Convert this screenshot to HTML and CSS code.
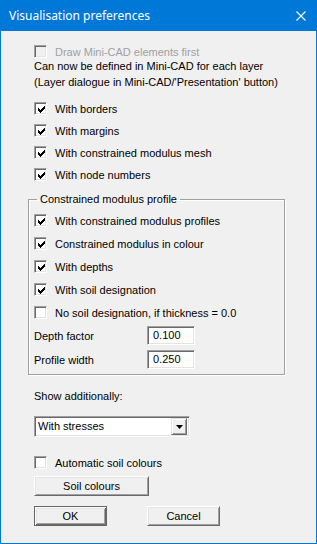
FILE: index.html
```html
<!DOCTYPE html>
<html lang="en">
<head>
  <meta charset="UTF-8" />
  <title>Visualisation preferences</title>
  <link rel="stylesheet" href="styles.css">
</head>
<body>

  <div class="window">
    <div class="titlebar">
      <span class="title">Visualisation preferences</span>
      <svg class="close" viewBox="0 0 10 10" width="10" height="10">
        <path d="M0.5 0.5L9.5 9.5M9.5 0.5L0.5 9.5" stroke="#fff" stroke-width="1.1" fill="none"/>
      </svg>
    </div>

    <div class="client">
      <div class="check disabled"><span class="box"></span><span class="label">Draw Mini-CAD elements first</span></div>
      <p class="note">Can now be defined in Mini-CAD for each layer<br>(Layer dialogue in Mini-CAD/'Presentation' button)</p>

      <div class="checks first">
        <div class="check on"><span class="box"></span><span class="label">With borders</span></div>
        <div class="check on"><span class="box"></span><span class="label">With margins</span></div>
        <div class="check on"><span class="box"></span><span class="label">With constrained modulus mesh</span></div>
        <div class="check on"><span class="box"></span><span class="label">With node numbers</span></div>
      </div>

      <fieldset class="group">
        <legend>Constrained modulus profile</legend>
        <div class="checks inner">
          <div class="check on"><span class="box"></span><span class="label">With constrained modulus profiles</span></div>
          <div class="check on"><span class="box"></span><span class="label">Constrained modulus in colour</span></div>
          <div class="check on"><span class="box"></span><span class="label">With depths</span></div>
          <div class="check on"><span class="box"></span><span class="label">With soil designation</span></div>
          <div class="check"><span class="box"></span><span class="label">No soil designation, if thickness = 0.0</span></div>
        </div>
        <div class="fields">
          <div class="field"><span class="field-label">Depth factor</span><span class="edit">0.100</span></div>
          <div class="field"><span class="field-label">Profile width</span><span class="edit">0.250</span></div>
        </div>
      </fieldset>

      <div class="caption">Show additionally:</div>
      <div class="combo">
        <span class="combo-value">With stresses</span>
        <span class="combo-btn">
          <svg viewBox="0 0 7 4" width="7" height="4"><path d="M0 0h7L3.5 4z" fill="#000"/></svg>
        </span>
      </div>

      <div class="check auto"><span class="box"></span><span class="label">Automatic soil colours</span></div>
      <button class="btn wide">Soil colours</button>

      <div class="buttons">
        <button class="btn default">OK</button>
        <button class="btn">Cancel</button>
      </div>
    </div>
  </div>

  <script>
    // tick mark for every checked box
    var tick = '<svg viewBox="0 0 9 9" width="9" height="9"><path fill="#000" d="M1 3h1v3h-1zM2 4h1v3h-1zM3 5h1v3h-1zM4 4h1v3h-1zM5 3h1v3h-1zM6 2h1v3h-1zM7 1h1v3h-1z"/></svg>';
    document.querySelectorAll('.check.on .box').forEach(function (b) {
      b.innerHTML = tick;
    });
  </script>

</body>
</html>
```

FILE: styles.css
```css
html, body {
  margin: 0;
  padding: 0;
}

body {
  font-family: "Liberation Sans", Arial, sans-serif;
  font-size: 11px;
  color: #000;
  background: #fff;
}

.window {
  width: 317px;
  height: 544px;
  box-sizing: border-box;
  border: 1px solid #0078d7;
  background: #f0f0f0;
  overflow: hidden;
}

.titlebar {
  height: 30px;
  background: #0078d7;
  display: flex;
  align-items: center;
  justify-content: space-between;
  padding: 0 10px 0 8px;
  color: #fff;
}

.title {
  font-family: "Noto Sans", "Open Sans", sans-serif;
  font-size: 12px;
  margin-top: -1px;
}

.close {
  display: block;
  margin-top: -1px;
}

.client {
  padding: 14px 0 0 33px;
}

/* checkboxes */
.check {
  display: flex;
  align-items: center;
  gap: 8px;
  height: 13px;
  white-space: nowrap;
}

.box {
  width: 13px;
  height: 13px;
  flex: none;
  box-sizing: border-box;
  background: #fff;
  border: 1px solid;
  border-color: #a0a0a0 #fff #fff #a0a0a0;
  box-shadow: inset 1px 1px 0 #696969, inset -1px -1px 0 #e3e3e3;
  display: flex;
  align-items: center;
  justify-content: center;
}

.box svg {
  display: block;
  margin: 1px 0 0 1px;
}

.check.disabled .box {
  background: #f0f0f0;
}

.check.disabled .label {
  color: #a0a0a0;
}

.note {
  margin: 0;
  line-height: 16px;
}

.checks {
  display: flex;
  flex-direction: column;
}

.checks.first {
  margin-top: 12px;
  gap: 9px;
}

/* group box */
.group {
  margin: 12px 0 0 -6px;
  width: 257px;
  box-sizing: border-box;
  padding: 8px 0 5px 5px;
  border: 1px solid #a0a0a0;
  box-shadow: inset 1px 1px 0 #fff, 1px 1px 0 #fff;
}

.group legend {
  padding: 0 3px;
  margin-left: 3px;
  line-height: 13px;
}

.checks.inner {
  gap: 10px;
}

.fields {
  margin-top: 7px;
  display: flex;
  flex-direction: column;
  gap: 5px;
}

.field {
  display: flex;
  align-items: center;
}

.field-label {
  width: 113px;
}

.edit {
  width: 48px;
  height: 19px;
  box-sizing: border-box;
  background: #fff;
  border: 1px solid;
  border-color: #a0a0a0 #fff #fff #a0a0a0;
  box-shadow: inset 1px 1px 0 #696969, inset -1px -1px 0 #e3e3e3;
  padding-left: 5px;
  line-height: 17px;
}

.caption {
  margin-top: 15px;
  line-height: 13px;
}

/* drop-down list */
.combo {
  margin-top: 13px;
  width: 156px;
  height: 21px;
  box-sizing: border-box;
  background: #fff;
  border: 1px solid;
  border-color: #a0a0a0 #fff #fff #a0a0a0;
  box-shadow: inset 1px 1px 0 #696969, inset -1px -1px 0 #e3e3e3;
  padding: 2px 2px 2px 3px;
  display: flex;
  align-items: center;
  justify-content: space-between;
}

.combo-value {
  line-height: 15px;
}

.combo-btn {
  width: 16px;
  height: 17px;
  box-sizing: border-box;
  background: #f0f0f0;
  border: 1px solid;
  border-color: #e3e3e3 #696969 #696969 #e3e3e3;
  box-shadow: inset 1px 1px 0 #fff, inset -1px -1px 0 #a0a0a0;
  display: flex;
  align-items: center;
  justify-content: center;
}

.combo-btn svg {
  display: block;
}

.check.auto {
  margin-top: 19px;
}

/* push buttons */
.btn {
  display: block;
  font: inherit;
  color: #000;
  background: #f0f0f0;
  height: 20px;
  width: 73px;
  padding: 0;
  box-sizing: border-box;
  border: 1px solid;
  border-color: #fff #696969 #696969 #fff;
  box-shadow: inset 1px 1px 0 #e3e3e3, inset -1px -1px 0 #a0a0a0;
}

.btn.wide {
  width: 115px;
  margin-top: 7px;
}

.btn.default {
  border: 1px solid #646464;
  box-shadow: inset 1px 1px 0 #fff, inset -1px -1px 0 #696969, inset 2px 2px 0 #e3e3e3, inset -2px -2px 0 #a0a0a0;
}

.buttons {
  display: flex;
  gap: 40px;
  margin-top: 10px;
}
```
